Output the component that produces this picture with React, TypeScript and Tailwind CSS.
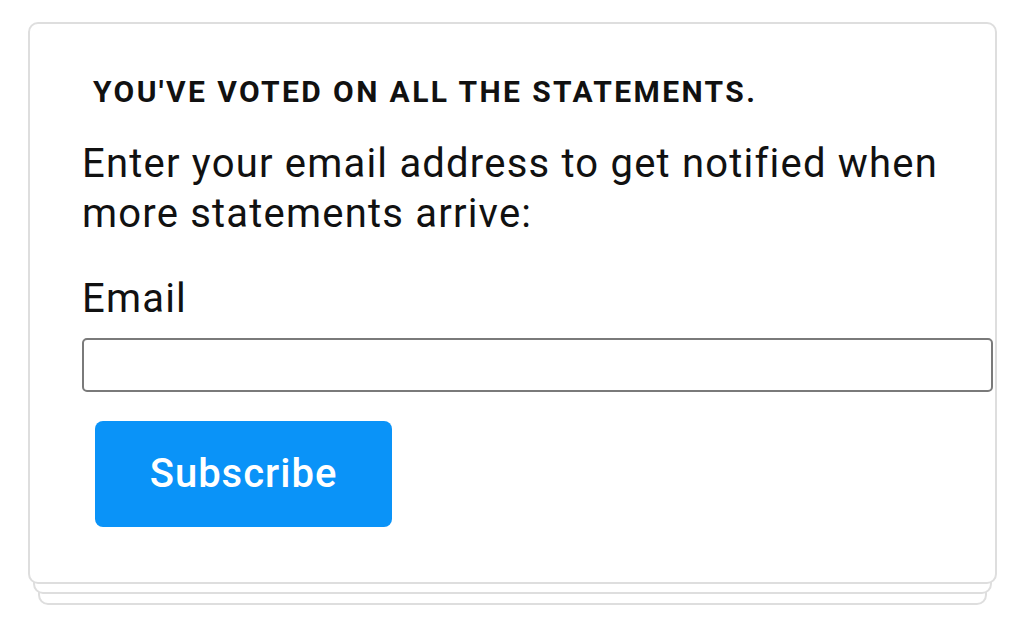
import React from 'react';

export default function App() {
  return (
    <div className="min-h-screen bg-white pt-[22px] pl-[28px] pr-[27px] font-['Roboto',sans-serif] text-[#111]">
      <div className="relative">
        {/* stacked cards peeking out below */}
        <div className="absolute left-[10px] right-[10px] top-[20px] bottom-[-21px] rounded-[10px] border-2 border-[#dedede] bg-white" />
        <div className="absolute left-[5px] right-[5px] top-[10px] bottom-[-10px] rounded-[10px] border-2 border-[#dedede] bg-white" />

        <div className="relative rounded-[10px] border-2 border-[#dedede] bg-white pl-[52px] pr-[2px] pt-[51px] pb-[55px]">
          <h2 className="ml-[11px] text-[30px] leading-[34px] font-bold uppercase tracking-[2.4px]">
            You've voted on all the statements.
          </h2>
          <p className="mt-[30px] text-[40px] leading-[50px] tracking-[1.2px]">
            Enter your email address to get notified when more statements arrive:
          </p>
          <label htmlFor="email" className="block mt-[35px] text-[40px] leading-[50px] tracking-[1.2px]">
            Email
          </label>
          <input
            id="email"
            type="email"
            className="mt-[14px] block w-full h-[54px] rounded-[5px] border-2 border-[#7a7a7a] bg-white px-3 text-[30px] outline-none"
          />
          <button className="mt-[29px] ml-[13px] w-[297px] h-[106px] rounded-[8px] bg-[#0a93f8] text-white text-[40px] tracking-[1px] font-medium">
            Subscribe
          </button>
        </div>
      </div>
    </div>
  );
}
